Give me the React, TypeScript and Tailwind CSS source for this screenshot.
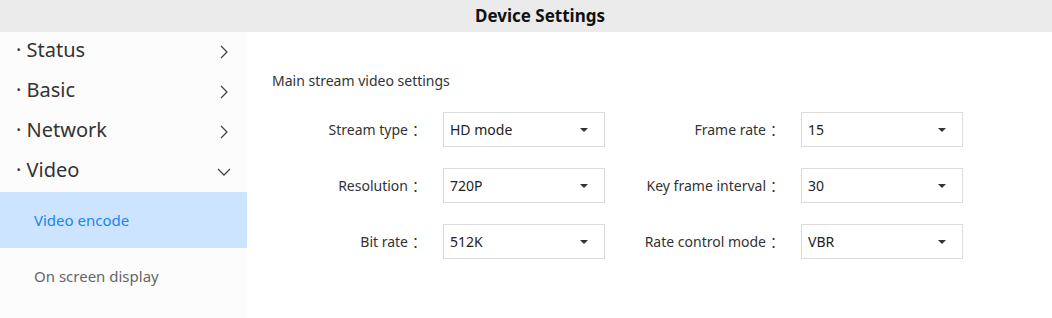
import React from "react";

const font = { fontFamily: '"Segoe UI", "Noto Sans", "Open Sans", "Noto Sans CJK SC", sans-serif' };

function Chevron({ down }: { down?: boolean }) {
  return (
    <svg width="14" height="14" viewBox="0 0 14 14" className="text-[#444]">
      {down ? (
        <path d="M1 4 L7 10 L13 4" fill="none" stroke="currentColor" strokeWidth="1.3" />
      ) : (
        <path d="M4 1 L10 7 L4 13" fill="none" stroke="currentColor" strokeWidth="1.3" />
      )}
    </svg>
  );
}

function NavItem({ label, down }: { label: string; down?: boolean }) {
  return (
    <div className="h-10 flex items-center justify-between pl-4 pr-[16px] text-[20px] text-[#333]">
      <span className="pb-1">· {label}</span>
      <Chevron down={down} />
    </div>
  );
}

function Select({ value }: { value: string }) {
  return (
    <div className="w-[162px] h-[35px] border border-[#dcdcdc] bg-white flex items-center justify-between pl-[6px] pr-[16px] text-[14px] text-[#222]">
      <span>{value}</span>
      <svg width="8" height="4" viewBox="0 0 8 4">
        <path d="M0 0 H8 L4 4 Z" fill="#333" />
      </svg>
    </div>
  );
}

function Field({ label, value, labelW }: { label: string; value: string; labelW: string }) {
  return (
    <div className="flex items-center">
      <div className={`${labelW} flex justify-end items-center text-[14px] text-[#333]`}>
        <span>{label}</span>
        <span
          className="w-[35px] pl-[4px] text-left"
          style={{ fontFamily: '"Noto Sans CJK SC", sans-serif' }}
        >
          ：
        </span>
      </div>
      <Select value={value} />
    </div>
  );
}

export default function App() {
  return (
    <div className="w-[1052px] h-[318px] bg-white overflow-hidden" style={font}>
      <div className="h-8 bg-[#ebebeb] flex items-center justify-center pl-[28px] text-[17px] font-bold text-[#111]">
        Device Settings
      </div>
      <div className="flex">
        <div className="w-[247px] h-[286px] bg-[#fcfcfc]">
          <NavItem label="Status" />
          <NavItem label="Basic" />
          <NavItem label="Network" />
          <NavItem label="Video" down />
          <div className="h-14 bg-[#cce4ff] flex items-center pl-[34px] text-[15px] text-[#1a85f0]">
            Video encode
          </div>
          <div className="h-14 flex items-center pl-[34px] text-[15px] text-[#666]">
            On screen display
          </div>
        </div>
        <div className="flex-1 pl-[25px] pt-[39px]">
          <div className="text-[14px] text-[#333] leading-5">Main stream video settings</div>
          <div className="mt-[21px] flex">
            <div className="flex flex-col gap-[21px]">
              <Field label="Stream type" value="HD mode" labelW="w-[171px]" />
              <Field label="Resolution" value="720P" labelW="w-[171px]" />
              <Field label="Bit rate" value="512K" labelW="w-[171px]" />
            </div>
            <div className="flex flex-col gap-[21px]">
              <Field label="Frame rate" value="15" labelW="w-[196px]" />
              <Field label="Key frame interval" value="30" labelW="w-[196px]" />
              <Field label="Rate control mode" value="VBR" labelW="w-[196px]" />
            </div>
          </div>
        </div>
      </div>
    </div>
  );
}
